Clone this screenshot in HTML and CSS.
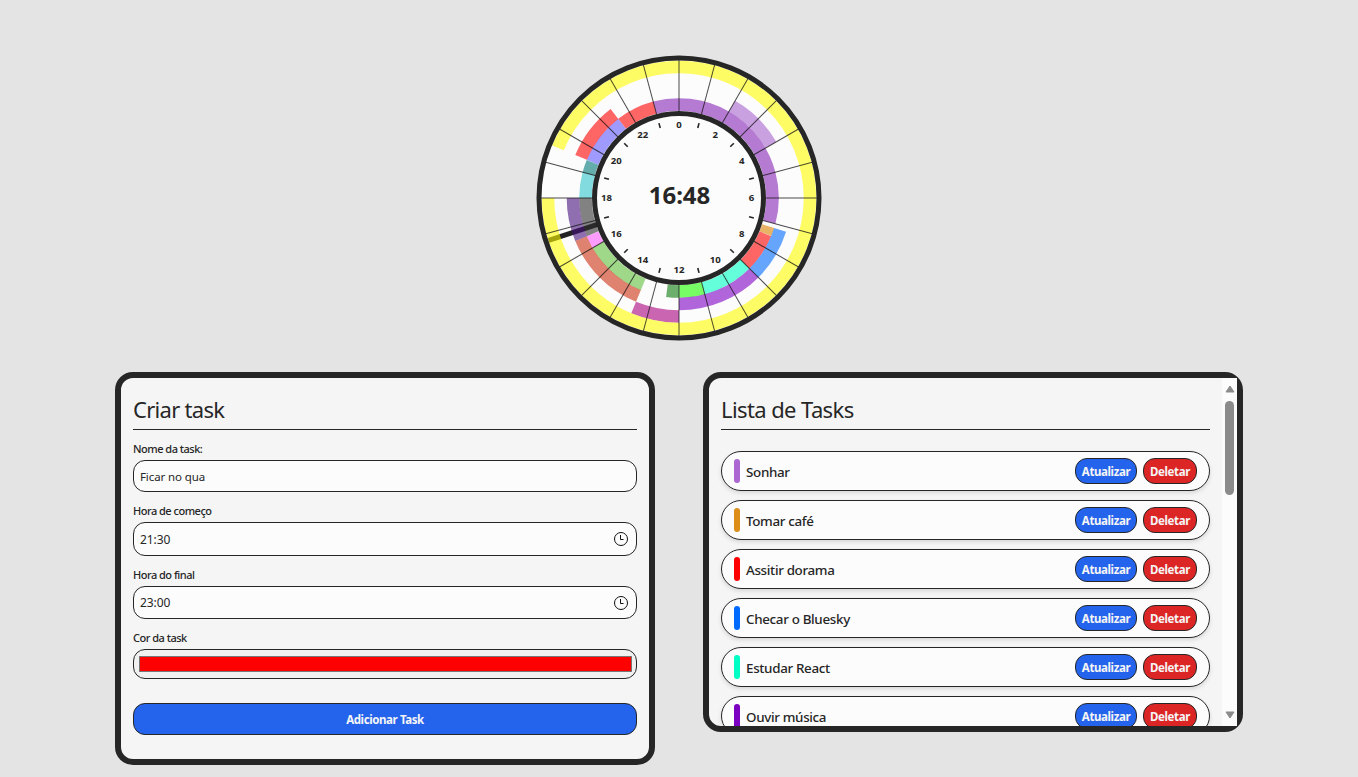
FILE: index.html
```
<!DOCTYPE html>
<html lang="pt-BR">
<head>
<meta charset="utf-8">
<title>Tasks</title>
<link rel="stylesheet" href="styles.css">
</head>
<body>
<main class="page">
  <svg class="clock" viewBox="-143 -143 286 286">
    <circle class="face" r="140"/>
    <g class="hand"><path d="M0 -84V-137"/></g>
    <g id="slices" class="slices"></g>
    <g id="lines" class="lines"></g>
    <circle class="rim" r="140"/>
    <circle class="hub" r="84.5"/>
    <g id="ticks" class="ticks"></g>
    <g id="hours" class="hours"></g>
    <text class="now" x="0.5" y="5.6">16:48</text>
  </svg>
  <div class="panels">
    <section class="card form-card">
      <h2 class="title">Criar task</h2>
      <div class="field"><span class="label">Nome da task:</span><div class="input name"><span class="value">Ficar no qua</span></div></div>
      <div class="field"><span class="label">Hora de começo</span><div class="input start"><span class="hour">21:30</span><svg class="time-icon" viewBox="0 0 16 16"><circle cx="8" cy="8" r="6.5"/><path d="M7.5 4V8.5H10.5"/></svg></div></div>
      <div class="field"><span class="label">Hora do final</span><div class="input end"><span class="hour">23:00</span><svg class="time-icon" viewBox="0 0 16 16"><circle cx="8" cy="8" r="6.5"/><path d="M7.5 4V8.5H10.5"/></svg></div></div>
      <div class="field"><span class="label">Cor da task</span><div class="input color"><div class="swatch"></div></div></div>
      <div class="submit">Adicionar Task</div>
    </section>
    <section class="card list-card">
      <div class="scroll-area">
        <h2 class="title list-title">Lista de Tasks</h2>
        <div class="list">
          <div class="item"><i class="bar sonhar"></i><span class="task">Sonhar</span><span class="btn update">Atualizar</span><span class="btn delete">Deletar</span></div>
          <div class="item"><i class="bar cafe"></i><span class="task">Tomar café</span><span class="btn update">Atualizar</span><span class="btn delete">Deletar</span></div>
          <div class="item"><i class="bar dorama"></i><span class="task">Assitir dorama</span><span class="btn update">Atualizar</span><span class="btn delete">Deletar</span></div>
          <div class="item"><i class="bar bluesky"></i><span class="task">Checar o Bluesky</span><span class="btn update">Atualizar</span><span class="btn delete">Deletar</span></div>
          <div class="item"><i class="bar react"></i><span class="task">Estudar React</span><span class="btn update">Atualizar</span><span class="btn delete">Deletar</span></div>
          <div class="item"><i class="bar musica"></i><span class="task">Ouvir música</span><span class="btn update">Atualizar</span><span class="btn delete">Deletar</span></div>
        </div>
      </div>
      <div class="scrollbar">
        <svg class="arrow" viewBox="0 0 10 8"><path d="M5 1L9 7H1Z"/></svg>
        <div class="thumb"></div>
        <svg class="arrow down" viewBox="0 0 10 8"><path d="M5 7L1 1H9Z"/></svg>
      </div>
    </section>
  </div>
</main>
<script src="clock.js"></script>
</body>
</html>
```
FILE: styles.css
```
* { box-sizing: border-box; }
body {
  margin: 0;
  background: #e4e4e4;
  color: #262626;
  font-family: "Noto Sans", "Open Sans", sans-serif;
}
.page {
  height: 777px;
  padding-top: 55px;
  display: flex;
  flex-direction: column;
  align-items: center;
  overflow: hidden;
}
.clock { width: 286px; height: 286px; flex: none; }
.face { fill: #fcfcfc; }
.rim, .hub { fill: none; stroke: #262626; stroke-width: 5; }
.hub { fill: #fcfcfc; }
.hand { transform: rotate(252deg); stroke: #222; stroke-width: 5; }
.slices circle { fill: none; stroke-width: 12.6; opacity: .6; }
.lines { stroke: #111; stroke-width: 1; opacity: .75; }
.ticks { stroke: #262626; stroke-width: 1.6; }
.hours { font-size: 9.6px; font-weight: 700; text-anchor: middle; fill: #262626; }
.now { font-size: 24px; font-weight: 700; text-anchor: middle; fill: #262626; }

.panels { display: flex; gap: 48px; margin-top: 31px; align-items: flex-start; }
.card {
  width: 540px;
  border: 6px solid #262626;
  border-radius: 18px;
  background: #f5f5f5;
}
.form-card { height: 393px; padding: 12px; }
.title {
  margin: 0;
  height: 40px;
  border-bottom: 1px solid #262626;
  font-size: 22px;
  font-weight: 400;
  letter-spacing: -.7px;
  line-height: 38px;
  white-space: nowrap;
}
.list-title { letter-spacing: -.6px; }
.field { display: flex; flex-direction: column; }
.label {
  height: 30px;
  padding-top: 12px;
  font-size: 11px;
  font-weight: 500;
  letter-spacing: -.5px;
  line-height: 14px;
}
.input {
  display: flex;
  align-items: center;
  border: 1px solid #262626;
  border-radius: 12px;
  background: #fcfcfc;
  padding: 0 7px 0 6px;
  font-size: 11.5px;
}
.value { letter-spacing: -.1px; }
.hour { font-size: 12px; letter-spacing: -.1px; }
.name { height: 32px; }
.start { height: 34px; }
.end { height: 33px; }
.color { height: 30px; background: #f0f0f0; padding: 0 4px 0 5px; }
.swatch { flex: 1; height: 16px; background: red; border: 1px solid #777; }
.time-icon { width: 16px; height: 16px; margin-left: auto; fill: none; stroke: #111; stroke-width: 1; }
.submit {
  height: 32px;
  margin-top: 24px;
  border: 1px solid #262626;
  border-radius: 12px;
  background: #2463eb;
  color: #f5f5f5;
  font-size: 11.5px;
  font-weight: 700;
  letter-spacing: -.4px;
  line-height: 31px;
  text-align: center;
}

.list-card { height: 360px; display: flex; }
.scroll-area {
  flex: 1;
  padding: 12px;
  overflow: hidden;
  border-radius: 12px 0 0 12px;
}
.list { margin-top: 21px; display: flex; flex-direction: column; gap: 9px; }
.item {
  height: 40px;
  flex: none;
  padding: 0 12px;
  display: flex;
  align-items: center;
  border: 1px solid #262626;
  border-radius: 20px;
  background: #fcfcfc;
  box-shadow: 0 2px 4px rgba(0, 0, 0, .12);
}
.bar { width: 6px; height: 24px; border-radius: 3px; margin-right: 6px; }
.sonhar { background: #ab68d2; }
.cafe { background: #dc8e19; }
.dorama { background: #ff0000; }
.bluesky { background: #006aff; }
.react { background: #00ffc4; }
.musica { background: #7b00c2; }
.task {
  flex: 1;
  padding-top: 1px;
  font-size: 13.4px;
  font-weight: 500;
  letter-spacing: -.33px;
  white-space: nowrap;
}
.btn {
  height: 26px;
  border: 1px solid #262626;
  border-radius: 12px;
  color: #f5f5f5;
  font-size: 11.5px;
  font-weight: 700;
  letter-spacing: -.4px;
  line-height: 25px;
  text-align: center;
  white-space: nowrap;
}
.update { width: 62px; background: #2463eb; margin-right: 6px; }
.delete { width: 54px; background: #dc2626; }
.scrollbar {
  width: 15px;
  background: #fcfcfc;
  display: flex;
  flex-direction: column;
  align-items: center;
  padding: 7px 0;
}
.thumb { width: 9px; height: 94px; margin-top: 8px; border-radius: 5px; background: #8b8b8b; }
.arrow { width: 10px; height: 8px; flex: none; fill: #8b8b8b; stroke: #8b8b8b; stroke-linejoin: round; }
.down { margin-top: auto; }
```
FILE: clock.js
```
const NS = "http://www.w3.org/2000/svg";
const add = (parent, tag, attrs, text) => {
  const el = document.createElementNS(NS, tag);
  for (const k in attrs) el.setAttribute(k, attrs[k]);
  if (text !== undefined) el.textContent = text;
  document.getElementById(parent).appendChild(el);
};

// [track, start hour, end hour, color]
const slices = [
  [0, 23, 31, "#8524b5"], [1, 2, 4, "#a864cd"],
  [0, 7.17, 7.5, "#dc8200"], [0, 7.5, 9, "#ff0000"], [1, 7.17, 9, "#006aff"],
  [0, 9, 11, "#00ffc4"], [0, 11, 12, "#20ff00"], [1, 9, 12, "#7f00c4"],
  [0, 12, 12.5, "#0c7a0c"], [2, 12, 13.5, "#a8007e"],
  [0, 13.5, 16, "#60bf3c"], [1, 13.5, 16.5, "#cc3010"],
  [0, 16, 16.5, "#ff5cff"], [0, 16.5, 18, "#303030"], [1, 16.5, 18, "#46107c"],
  [0, 18, 19, "#30c4cc"], [0, 19, 19.5, "#007878"],
  [0, 19.5, 21.5, "#6058ff"], [1, 19.5, 21.5, "#ff0000"], [0, 21.5, 23, "#ff0000"],
  [3, 19.5, 42, "#fffb00"]
];
for (const [track, from, to, color] of slices) {
  add("slices", "circle", {
    r: 93.5 + track * 12.5, stroke: color, pathLength: 24,
    "stroke-dasharray": `${to - from} 24`,
    transform: `rotate(${from * 15 - 90})`
  });
}
for (let h = 0; h < 24; h++) {
  add("lines", "path", { d: "M0 -86V-138", transform: `rotate(${h * 15})` });
  if (h % 2) {
    add("ticks", "path", { d: "M0 -72.5V-77.5", transform: `rotate(${h * 15})` });
  } else {
    const a = h * Math.PI / 12;
    add("hours", "text", { x: 72.5 * Math.sin(a), y: 2.6 - 72.5 * Math.cos(a) }, h);
  }
}
```
